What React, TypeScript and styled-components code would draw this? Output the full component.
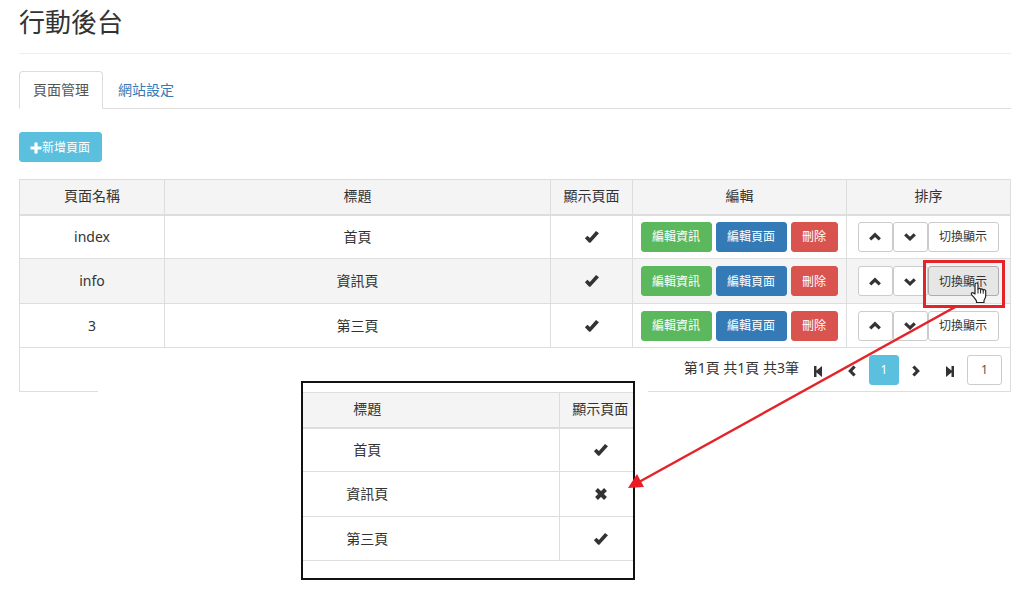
import React from "react";
import styled, { createGlobalStyle, css } from "styled-components";

const GlobalStyle = createGlobalStyle`
  *, *::before, *::after { box-sizing: border-box; }
  body {
    margin: 0;
    background: #fff;
    color: #333;
    font: 14px/20px "Noto Sans", "Noto Sans CJK TC", sans-serif;
  }
`;

const Page = styled.main`
  padding: 4px 13px 0 19px;
`;

const Title = styled.h1`
  margin: 0;
  padding-bottom: 13px;
  border-bottom: 1px solid #eee;
  font-size: 26px;
  line-height: 36px;
  font-weight: 400;
`;

const Tabs = styled.nav`
  display: flex;
  margin: 17px 0 23px;
  border-bottom: 1px solid #ddd;
`;

const Tab = styled.a<{ $active?: boolean }>`
  padding: 8px 13px;
  margin: 0 1px -1px 0;
  border: 1px solid transparent;
  border-radius: 4px 4px 0 0;
  color: #337ab7;
  text-decoration: none;
  ${(p) =>
    p.$active &&
    css`
      color: #555;
      background: #fff;
      border-color: #ddd #ddd #fff;
    `}
`;

const tones = {
  info: ["#5bc0de", "#5bc0de", "#fff"],
  success: ["#5cb85c", "#5cb85c", "#fff"],
  primary: ["#337ab7", "#337ab7", "#fff"],
  danger: ["#d9534f", "#d9534f", "#fff"],
  plain: ["#fff", "#ccc", "#333"],
  pressed: ["#e6e6e6", "#adadad", "#333"],
};

const Button = styled.button<{ $tone: keyof typeof tones }>`
  display: inline-flex;
  align-items: center;
  justify-content: center;
  height: 30px;
  padding: 1px 11px 0 10px;
  border: 1px solid ${(p) => tones[p.$tone][1]};
  border-radius: 3px;
  background: ${(p) => tones[p.$tone][0]};
  color: ${(p) => tones[p.$tone][2]};
  font: inherit;
  font-size: 12px;
  line-height: 18px;
  white-space: nowrap;
  cursor: pointer;
`;

const Table = styled.table`
  width: 100%;
  margin-top: 17px;
  border: 1px solid #ddd;
  border-collapse: collapse;
  table-layout: fixed;
`;

const Th = styled.th<{ $width?: number }>`
  width: ${(p) => (p.$width ? p.$width + "px" : "auto")};
  height: 35px;
  padding: 0 0 2px;
  border: 1px solid #ddd;
  border-bottom-width: 2px;
  background: #f4f4f4;
  font-weight: 400;
`;

const Td = styled.td`
  height: 44px;
  padding: 0;
  border: 1px solid #ddd;
  text-align: center;
  vertical-align: middle;
  & > svg { display: block; margin: 0 auto; }
`;

const Row = styled.tr<{ $striped?: boolean }>`
  background: ${(p) => (p.$striped ? "#f4f4f4" : "#fff")};
  &:nth-child(2) ${Td} { height: 45px; }
`;

const Group = styled.div<{ $gap: number }>`
  display: flex;
  justify-content: center;
  gap: ${(p) => p.$gap}px;
`;

const Highlighted = styled.span`
  position: relative;
  display: inline-flex;
`;

const Marker = styled.span`
  position: absolute;
  inset: -6px -6px -12px -5px;
  border: 3px solid #e3242b;
  pointer-events: none;
`;

const Cursor = styled.svg`
  position: absolute;
  right: 12px;
  bottom: -8px;
`;

const Pager = styled.div`
  display: flex;
  justify-content: flex-end;
  align-items: center;
  padding-right: 8px;
`;

const Summary = styled.span`
  padding: 0 2px 3px 0;
`;

const IconButton = styled.button`
  display: flex;
  justify-content: center;
  width: 34px;
  padding: 2px 0 0;
  border: 0;
  background: none;
  color: #333;
  cursor: pointer;
`;

const PageButton = styled(Button)`
  width: 30px;
  padding: 0;
`;

const PageInput = styled.input`
  width: 35px;
  height: 30px;
  padding: 0;
  border: 1px solid #ccc;
  border-radius: 3px;
  background: #fff;
  color: #555;
  font: inherit;
  font-size: 12px;
  text-align: center;
`;

const Content = styled.div`
  position: relative;
`;

const ResultPatch = styled.div`
  position: relative;
  width: 550px;
  margin: -11px 363px 0 auto;
  padding: 0 13px 0 203px;
  background: #fff;
`;

const ResultFrame = styled.div`
  overflow: hidden;
  padding: 9px 0 17px;
  border: 2px solid #111;
`;

const ResultTable = styled.table`
  width: 100%;
  border-collapse: collapse;
  table-layout: fixed;
  th, td { border-width: 1px 0 1px 0; }
  th { border-bottom-width: 2px; }
  th:first-child, td:first-child { padding-right: 127px; }
  th:last-child, td:last-child { border-left: 1px solid #ddd; }
  th:last-child { padding-left: 8px; }
  td:last-child { padding-left: 9px; }
`;

const Arrow = styled.svg`
  position: absolute;
  top: 126px;
  right: 50px;
  pointer-events: none;
`;

const Check = () => (
  <svg width="16" height="14" viewBox="0 0 16 14" aria-label="是">
    <path d="M.9 8.200 3.400 5.700l2.500 2.200L12 1l3 2.300-8.400 9.100q-.8.800-1.700 0z" fill="#333" />
  </svg>
);

const Cross = () => (
  <svg width="14" height="14" viewBox="0 0 14 14" aria-label="否">
    <path d="m2.500 2.500 9 9m0-9-9 9" stroke="#333" strokeWidth="4" />
  </svg>
);

const Plus = () => (
  <svg width="12" height="12" viewBox="0 0 12 12" aria-hidden="true">
    <path d="M6 .5v11M.5 6h11" stroke="currentColor" strokeWidth="3.200" />
  </svg>
);

const chevrons = {
  up: "M1.200 8.300 6 3.800l4.800 4.500",
  down: "M1.200 3.300 6 7.800l4.800-4.500",
  left: "M8.600 1.500 4.300 6l4.300 4.500",
  right: "M3.400 1.500 7.700 6l-4.300 4.500",
};

const Chevron = ({ dir }: { dir: keyof typeof chevrons }) => (
  <svg width="12" height="12" viewBox="0 0 12 12" aria-hidden="true">
    <path d={chevrons[dir]} fill="none" stroke="currentColor" strokeWidth="3.200" />
  </svg>
);

const Step = ({ forward }: { forward?: boolean }) => (
  <svg width="12" height="12" viewBox="0 0 12 12" aria-hidden="true">
    <path
      d={forward ? "M2 1l5.500 4.500V1H10v11H7.500V7.500L2 12z" : "M10 1 4.500 5.500V1H2v11h2.500V7.500L10 12z"}
      fill="currentColor"
    />
  </svg>
);

const rows = [
  { name: "index", title: "首頁" },
  { name: "info", title: "資訊頁", pressed: true },
  { name: "3", title: "第三頁" },
];

export default function App() {
  return (
    <>
      <GlobalStyle />
      <Page>
        <Title>行動後台</Title>
        <Tabs>
          <Tab href="#pages" $active>頁面管理</Tab>
          <Tab href="#settings">網站設定</Tab>
        </Tabs>
        <Button $tone="info"><Plus />新增頁面</Button>
        <Content>
          <Table>
            <thead>
              <tr>
                <Th $width={145}>頁面名稱</Th>
                <Th>標題</Th>
                <Th $width={82}>顯示頁面</Th>
                <Th $width={214}>編輯</Th>
                <Th $width={164}>排序</Th>
              </tr>
            </thead>
            <tbody>
              {rows.map((r) => (
                <Row key={r.name} $striped={r.pressed}>
                  <Td>{r.name}</Td>
                  <Td>{r.title}</Td>
                  <Td><Check /></Td>
                  <Td>
                    <Group $gap={4}>
                      <Button $tone="success">編輯資訊</Button>
                      <Button $tone="primary">編輯頁面</Button>
                      <Button $tone="danger">刪除</Button>
                    </Group>
                  </Td>
                  <Td>
                    <Group $gap={0}>
                      <Button $tone="plain" aria-label="上移"><Chevron dir="up" /></Button>
                      <Button $tone="plain" aria-label="下移"><Chevron dir="down" /></Button>
                      {r.pressed ? (
                        <Highlighted>
                          <Button $tone="pressed">切換顯示</Button>
                          <Marker />
                          <Cursor width="17" height="22" viewBox="0 0 17 22" aria-hidden="true">
                            <path
                              d="M5 12V2.500a1.500 1.500 0 0 1 3 0V7.500a1.300 1.300 0 0 1 2.600.5 1.300 1.300 0 0 1 2.600.7 1.200 1.200 0 0 1 2.500.6V14c0 2-1.200 3-1.700 4.500V20.500H6.500V19C5.500 17 3 14.500 1.500 12.500c-.7-1.500 1-2.500 2-1.500z"
                              fill="#fff" stroke="#222" strokeWidth="1.200" strokeLinejoin="round"
                            />
                            <path d="M8 7.500v4M10.600 8v3.500M13.200 8.700v3" stroke="#222" />
                          </Cursor>
                        </Highlighted>
                      ) : (
                        <Button $tone="plain">切換顯示</Button>
                      )}
                    </Group>
                  </Td>
                </Row>
              ))}
            </tbody>
            <tfoot>
              <Row>
                <Td colSpan={5}>
                  <Pager>
                    <Summary>第1頁 共1頁 共3筆</Summary>
                    <IconButton aria-label="第一頁"><Step /></IconButton>
                    <IconButton aria-label="上一頁"><Chevron dir="left" /></IconButton>
                    <PageButton $tone="info">1</PageButton>
                    <IconButton aria-label="下一頁"><Chevron dir="right" /></IconButton>
                    <IconButton aria-label="最後一頁"><Step forward /></IconButton>
                    <PageInput aria-label="頁碼" defaultValue="1" />
                  </Pager>
                </Td>
              </Row>
            </tfoot>
          </Table>
          <ResultPatch>
            <ResultFrame>
              <ResultTable>
                <thead>
                  <tr><Th>標題</Th><Th $width={74}>顯示頁面</Th></tr>
                </thead>
                <tbody>
                  {rows.map((r) => (
                    <Row key={r.name}>
                      <Td>{r.title}</Td>
                      <Td>{r.pressed ? <Cross /> : <Check />}</Td>
                    </Row>
                  ))}
                </tbody>
              </ResultTable>
            </ResultFrame>
          </ResultPatch>
          <Arrow width="334" height="186" viewBox="0 0 334 186" aria-hidden="true">
            <path d="M330 1 12 177" stroke="#e3242b" strokeWidth="2.500" />
            <path d="m1 183 9-14 7 13z" fill="#ed1c24" />
          </Arrow>
        </Content>
      </Page>
    </>
  );
}
